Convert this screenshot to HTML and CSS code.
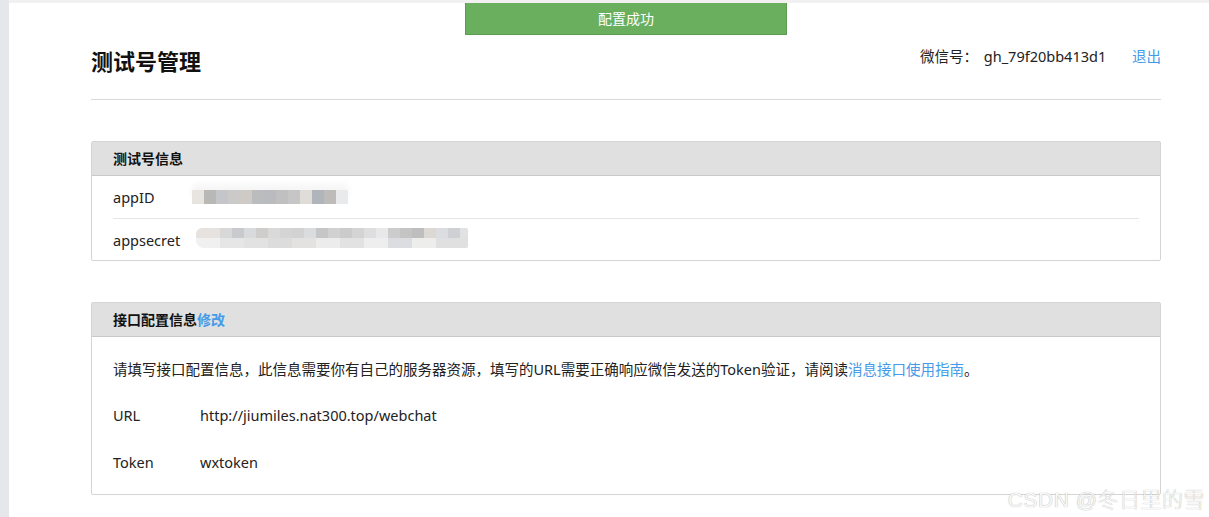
FILE: index.html
```html
<!DOCTYPE html>
<html lang="zh-CN">
<head>
  <meta charset="UTF-8" />
  <title>测试号管理</title>
  <link rel="stylesheet" href="styles.css">
</head>
<body>
  <div class="sidebar"></div>

  <div class="main">
    <div class="toast">配置成功</div>

    <div class="page-header">
      <h1 class="page-title">测试号管理</h1>
      <div class="account">
        <span class="account-label">微信号：</span>
        <span class="account-id">gh_79f20bb413d1</span>
        <a href="#" class="logout">退出</a>
      </div>
    </div>

    <div class="panel">
      <div class="panel-head">测试号信息</div>
      <div class="panel-body">
        <div class="info-row">
          <span class="info-label">appID</span>
          <span class="mask mask-appid"></span>
        </div>
        <div class="info-row">
          <span class="info-label">appsecret</span>
          <span class="mask mask-secret"></span>
        </div>
      </div>
    </div>

    <div class="panel">
      <div class="panel-head">接口配置信息<a href="#" class="edit-link">修改</a></div>
      <div class="panel-body config-body">
        <p class="config-tip">请填写接口配置信息，此信息需要你有自己的服务器资源，填写的URL需要正确响应微信发送的Token验证，请阅读<a href="#" class="guide-link">消息接口使用指南</a>。</p>
        <div class="config-row">
          <span class="config-label">URL</span>
          <span class="config-value">http://jiumiles.nat300.top/webchat</span>
        </div>
        <div class="config-row">
          <span class="config-label">Token</span>
          <span class="config-value">wxtoken</span>
        </div>
      </div>
    </div>
  </div>

  <div class="watermark">CSDN @冬日里的雪</div>
</body>
</html>
```

FILE: styles.css
```css
:root {
  --text-color: #222222;
  --link-color: #459ae9;
  --panel-border: #d4d4d4;
  --panel-head: #e0e0e0;
}

* {
  box-sizing: border-box;
  margin: 0;
  padding: 0;
}

body {
  display: flex;
  min-height: 517px;
  font-family: "Noto Sans", "Noto Sans CJK SC", sans-serif;
  font-size: 14.5px;
  color: var(--text-color);
  background: #ffffff;
  overflow: hidden;
}

a {
  text-decoration: none;
  color: var(--link-color);
}

.sidebar {
  width: 9px;
  flex-shrink: 0;
  background: #e6e7eb;
}

.main {
  position: relative;
  flex: 1;
  border-top: 3px solid #f1f1f1;
  padding: 0 48px 0 82px;
}

.toast {
  position: absolute;
  top: 0;
  left: 456px;
  width: 322px;
  height: 32px;
  line-height: 31px;
  text-align: center;
  color: #ffffff;
  font-size: 14px;
  background: #6aaf5e;
  border: 1px solid #5d9d52;
  border-top: none;
}

.page-header {
  display: flex;
  justify-content: space-between;
  align-items: flex-start;
  padding-top: 43px;
  padding-bottom: 23px;
  border-bottom: 1px solid #d9d9d9;
}

.page-title {
  font-size: 22px;
  line-height: 30px;
  font-weight: 700;
  color: #111111;
}

.account {
  line-height: 20px;
}

.account-id {
  margin-left: 2px;
}

.logout {
  margin-left: 22px;
}

.panel {
  margin-top: 41px;
  border: 1px solid var(--panel-border);
  border-radius: 2px;
}

.panel-head {
  height: 34px;
  line-height: 33px;
  padding-left: 21px;
  font-size: 14px;
  font-weight: 700;
  color: #111111;
  background: var(--panel-head);
  border-bottom: 1px solid #c9c9c9;
}

.panel-body {
  padding: 0 21px;
}

.info-row {
  display: flex;
  align-items: center;
  height: 42px;
}

.info-row + .info-row {
  border-top: 1px solid #e6e6e6;
}

.info-label {
  width: 79px;
}

/* pixelated blur over the secret values */
.mask {
  display: block;
  filter: blur(0.6px);
}

.mask-appid {
  width: 156px;
  height: 14px;
  background: linear-gradient(90deg,
    #e8e4e0 0 12px, #b8b8b6 12px 24px, #c4c6ca 24px 36px, #cbcac8 36px 48px,
    #cecbc6 48px 60px, #bbbcbe 60px 72px, #b9bbbe 72px 84px, #c0c0c0 84px 96px,
    #c6c6c6 96px 108px, #e0ddd8 108px 120px, #b0b4bb 120px 132px,
    #bebcba 132px 144px, #e8eaec 144px 156px);
  box-shadow: 0 -6px 6px #f6f6f6;
}

.mask-secret {
  width: 272px;
  height: 20px;
  margin-left: 4px;
  margin-top: -3px;
  border-radius: 6px 2px 2px 8px;
  background:
    linear-gradient(90deg,
      #e6e2df 0 24px, #d8d8d8 24px 36px, #c8cace 36px 48px, #d8dadc 48px 60px,
      #cfcdcb 60px 72px, #d9d9d9 72px 84px, #d4d4d4 84px 96px, #d2d2d2 96px 108px,
      #dadcde 108px 120px, #c6c6c6 120px 132px, #d1d1d1 132px 144px,
      #cbcbcb 144px 156px, #d4d4d4 156px 168px, #dedede 168px 180px,
      #e8e8ea 180px 192px, #cccccc 192px 204px, #c4c4c4 204px 216px,
      #bebebe 216px 228px, #dcd8d4 228px 240px, #dcdde0 240px 252px,
      #cfd0d4 252px 264px, #e2e2e2 264px 272px) top / 100% 10px no-repeat,
    linear-gradient(90deg,
      #f0f0f0 0 24px, #e6e6e6 24px 48px, #e2e2e2 48px 72px, #dcdcdc 72px 96px,
      #e4e2e0 96px 120px, #ececec 120px 144px, #e2e2e2 144px 168px,
      #eeeeee 168px 192px, #dcdde0 192px 216px, #ededeb 216px 240px,
      #e0e0e0 240px 272px) bottom / 100% 10px no-repeat;
}

.config-body {
  padding-top: 22px;
  padding-bottom: 8px;
}

.config-tip {
  line-height: 20px;
  margin-bottom: 13px;
}

.config-row {
  display: flex;
  height: 47px;
  line-height: 47px;
}

.config-label {
  width: 87px;
}

.watermark {
  position: absolute;
  right: 4px;
  bottom: 4px;
  font-family: "Liberation Sans", "Noto Sans CJK SC", sans-serif;
  font-size: 21px;
  font-weight: 300;
  color: #f8f8f8;
  text-shadow: 0 0 1px #9a9a9a;
  letter-spacing: 0.5px;
}
```
